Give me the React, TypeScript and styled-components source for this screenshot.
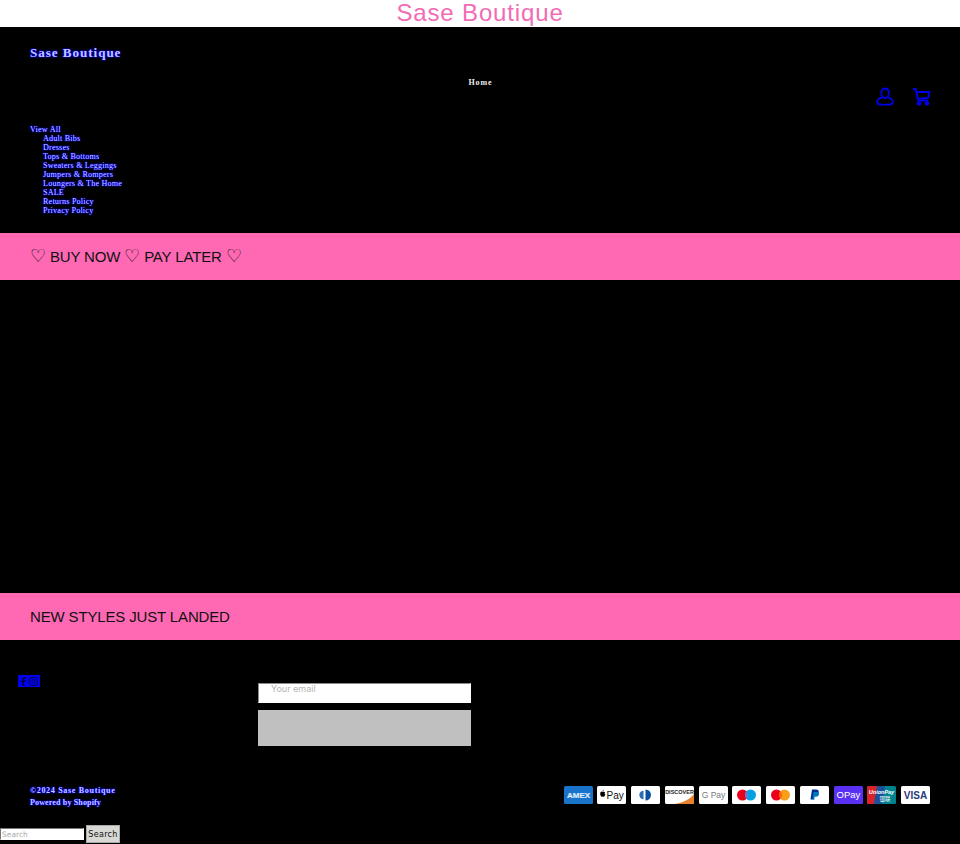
import React from 'react'
import styled, { createGlobalStyle } from 'styled-components'

const GlobalStyle = createGlobalStyle`
  html, body {
    margin: 0;
    background: #000;
    font-family: "Liberation Sans", Arial, sans-serif;
  }
`

const halo = `
  color: #c4c4ff;
  text-shadow: 0 0 1px #0000ff, 0 0 1px #0000ff, 0 0 2px #0000ff, 0 0 2px #0000ff;
`

const Page = styled.div`
  width: 960px;
  height: 844px;
  overflow: hidden;
  display: flex;
  flex-direction: column;
  background: #000;
`

const TopBar = styled.div`
  height: 27px;
  background: #fff;
  color: #f26bb5;
  font-size: 24px;
  line-height: 26px;
  letter-spacing: 0.85px;
  text-align: center;
`

const Header = styled.header`
  height: 206px;
  padding: 19px 29px 0 30px;
  box-sizing: border-box;
`

const Logo = styled.a`
  display: block;
  font-family: "Liberation Serif", serif;
  font-size: 13px;
  font-weight: 700;
  line-height: 14px;
  letter-spacing: 1px;
  ${halo}
`

const CenterNav = styled.div`
  margin-top: 18px;
  font-family: "Liberation Serif", serif;
  font-size: 8px;
  font-weight: 700;
  line-height: 9px;
  letter-spacing: 0.9px;
  color: #f0f0f0;
  text-align: center;
`

const IconRow = styled.div`
  display: flex;
  justify-content: flex-end;
  gap: 18px;
  height: 20px;
`

const Menu = styled.ul`
  list-style: none;
  margin: 18px 0 0;
  padding: 0;
  font-family: "Liberation Serif", serif;
  font-size: 8px;
  line-height: 9px;
  letter-spacing: 0.25px;
  ${halo}
`

const SubMenu = styled.ul`
  list-style: none;
  margin: 0;
  padding: 0 0 0 13px;
`

const Band = styled.div<{ $top: number }>`
  height: 47px;
  margin-top: ${p => p.$top}px;
  padding-left: 30px;
  background: #ff69b4;
  color: #111;
  font-size: 15px;
  letter-spacing: -0.15px;
  line-height: 47px;
`

const Heart = styled.span`
  font-size: 17.500px;
`

const Footer = styled.footer`
  flex: 1;
  display: flex;
  flex-direction: column;
  min-height: 0;
`

const FooterTop = styled.div`
  display: flex;
  height: 145px;
  padding: 34px 0 0 18px;
  box-sizing: border-box;
`

const Social = styled.div`
  display: flex;
  align-items: center;
  justify-content: center;
  gap: 3px;
  width: 22px;
  height: 12px;
  margin-top: 1px;
  background: #0000ee;
`

const Signup = styled.form`
  display: flex;
  flex-direction: column;
  gap: 7px;
  width: 213px;
  margin: 9px 0 0 218px;
`

const EmailInput = styled.input`
  height: 20px;
  box-sizing: border-box;
  padding: 0 12px 9px;
  border: 1px solid #fff;
  border-top: 1px solid #8a8a8a;
  border-left: 1px solid #8a8a8a;
  background: #fff;
  font-family: Inter, "Liberation Sans", sans-serif;
  font-size: 9px;
  &::placeholder {
    color: #b4b4b4;
  }
`

const SubmitButton = styled.button`
  height: 36px;
  border: 0;
  background: #c0c0c0;
`

const FooterBottom = styled.div`
  display: flex;
  justify-content: space-between;
  padding: 0 30px;
  height: 40px;
`

const Legal = styled.div`
  font-family: "Liberation Serif", serif;
  font-size: 8px;
  font-weight: 700;
  line-height: 12px;
  letter-spacing: 0.7px;
  ${halo}
`

const PoweredBy = styled.div`
  letter-spacing: 0.15px;
`

const Payments = styled.div`
  display: flex;
  gap: 4.750px;
  padding-top: 1px;
`

const PayCard = styled.svg`
  width: 29px;
  height: 18px;
  display: block;
`

const SearchBar = styled.form`
  display: flex;
  align-items: center;
  gap: 2px;
`

const SearchInput = styled.input`
  width: 84px;
  height: 12px;
  box-sizing: border-box;
  padding: 0 1px;
  border: 1px solid #fff;
  border-top-color: #777;
  border-left-color: #777;
  background: #fff;
  font-family: "DejaVu Sans", sans-serif;
  font-size: 7.5px;
  &::placeholder {
    color: #aaa;
  }
`

const SearchButton = styled.button`
  width: 34px;
  height: 18px;
  padding: 0;
  border: 1px solid #aaa;
  background: #d8d8d4;
  color: #111;
  font-family: "DejaVu Sans", sans-serif;
  font-size: 8px;
  letter-spacing: 0.3px;
`

const bold = { fontFamily: '"Liberation Sans", sans-serif', fontWeight: 700 }
const regular = { fontFamily: '"Liberation Sans", sans-serif', fontWeight: 400 }

const Card = ({ bg = '#fff', children }: { bg?: string; children: React.ReactNode }) => (
  <PayCard viewBox="0 0 29 18">
    <rect width="29" height="18" rx="1.500" fill={bg} />
    {children}
  </PayCard>
)

const App = () => (
  <Page>
    <GlobalStyle />
    <TopBar>Sase Boutique</TopBar>
    <Header>
      <Logo>Sase Boutique</Logo>
      <CenterNav>Home</CenterNav>
      <IconRow>
        <svg width="18" height="20" viewBox="0 0 18 20" fill="none" stroke="#0000ee" strokeWidth="1.8">
          <path d="M9 1.500c2.500 0 3.800 1.800 3.800 4.400S11.500 11 9 11 5.200 8.500 5.200 5.900 6.500 1.500 9 1.500z" />
          <path d="M6 10.400C3.400 11.200 1.200 12.800 1.200 15c0 1.800 1.500 2.600 3.600 2.600h8.400c2.100 0 3.600-.8 3.600-2.600 0-2.200-2.200-3.800-4.800-4.600" />
        </svg>
        <svg width="19" height="20" viewBox="0 0 19 20" fill="none" stroke="#0000ee" strokeWidth="1.8">
          <path d="M1 2h2.600l2.600 11.500h10" />
          <path d="M4 5h13.500l-1.300 5.800-10.600 1" />
          <circle cx="7" cy="16.500" r="1.400" fill="#0000ee" />
          <circle cx="15" cy="16.500" r="1.400" fill="#0000ee" />
        </svg>
      </IconRow>
      <Menu>
        <li>
          View All
          <SubMenu>
            <li>Adult Bibs</li>
            <li>Dresses</li>
            <li>Tops &amp; Bottoms</li>
            <li>Sweaters &amp; Leggings</li>
            <li>Jumpers &amp; Rompers</li>
            <li>Loungers &amp; The Home</li>
            <li>SALE</li>
            <li>Returns Policy</li>
            <li>Privacy Policy</li>
          </SubMenu>
        </li>
      </Menu>
    </Header>
    <Band $top={0}>
      <Heart>♡</Heart> BUY NOW <Heart>♡</Heart> PAY LATER <Heart>♡</Heart>
    </Band>
    <Band $top={313}>NEW STYLES JUST LANDED</Band>
    <Footer>
      <FooterTop>
        <Social>
          <svg width="5" height="9" viewBox="0 0 5 9" fill="#000049">
            <path d="M1.500 9V5H0V3.400h1.500V2.200C1.500.8 2.300 0 3.600 0H5v1.600H4c-.5 0-.8.3-.8.800v1h1.700L4.700 5H3.200v4z" />
          </svg>
          <svg width="9" height="9" viewBox="0 0 9 9" fill="none" stroke="#000049">
            <rect x=".5" y=".5" width="8" height="8" rx="2.200" />
            <circle cx="4.500" cy="4.500" r="1.800" />
          </svg>
        </Social>
        <Signup>
          <EmailInput placeholder="Your email" />
          <SubmitButton type="button" aria-label="Subscribe" />
        </Signup>
      </FooterTop>
      <FooterBottom>
        <Legal>
          <div>©2024 Sase Boutique</div>
          <PoweredBy>Powered by Shopify</PoweredBy>
        </Legal>
        <Payments>
          <Card bg="#1a74c9">
            <text x="14.500" y="12" textAnchor="middle" fontSize="8" fill="#cfe6ff" stroke="#fff" strokeWidth=".2" style={bold}>AMEX</text>
          </Card>
          <Card>
            <path d="M6.800 5.800c.5 0 1 .2 1.300.5-.7.5-.7 1.800.2 2.300-.3.900-.9 2.100-1.500 2.100-.4 0-.6-.3-1-.3s-.7.300-1 .3c-.8 0-1.600-1.700-1.600-3 0-1.400.9-2.100 1.600-2.100.5 0 .8.300 1 .3s.5-.400 1-.400zM6.700 3.800c0 .800-.6 1.500-1.200 1.500 0-.8.600-1.500 1.200-1.500z" fill="#000" />
            <text x="9.500" y="12.700" fontSize="10" fill="#111" style={regular}>Pay</text>
          </Card>
          <Card>
            <path d="M12.500 4.800v8.400a4.200 4.200 0 0 1 0-8.400z" fill="#2a6db5" />
            <path d="M14.500 3.500v11a5.500 5.500 0 0 0 0-11z" fill="#0b4f9e" />
          </Card>
          <Card>
            <path d="M29 8v8.500a1.500 1.500 0 0 1-1.500 1.500H10C19 16.500 25 13 29 8z" fill="#e8812b" />
            <text x="14.500" y="8" textAnchor="middle" fontSize="5.500" fill="#222" style={bold}>DISCOVER</text>
          </Card>
          <Card>
            <text x="14.500" y="12" textAnchor="middle" fontSize="8.500" fill="#777b80" style={regular}>G Pay</text>
          </Card>
          <Card>
            <circle cx="10.500" cy="9" r="5.500" fill="#eb001b" />
            <circle cx="18.500" cy="9" r="5.500" fill="#00a2e5" />
            <path d="M14.500 5.200a5.500 5.500 0 0 1 0 7.600 5.500 5.500 0 0 1 0-7.600z" fill="#7375cf" />
          </Card>
          <Card>
            <circle cx="10.500" cy="9" r="5.500" fill="#eb001b" />
            <circle cx="18.500" cy="9" r="5.500" fill="#f79e1b" />
            <path d="M14.500 5.200a5.500 5.500 0 0 1 0 7.600 5.500 5.500 0 0 1 0-7.600z" fill="#ff5f00" />
          </Card>
          <Card>
            <path d="M12 3.500h4c2 0 3 1 2.700 2.800-.3 2-1.700 3-3.600 3h-1.500l-.6 4.200H10.500z" fill="#003087" />
            <path d="M13.500 6h3.500c1.500 0 2.300.800 2 2.300-.3 1.700-1.500 2.500-3 2.500h-1.300l-.5 3H12.500z" fill="#0079c1" />
          </Card>
          <Card bg="#5a31f4">
            <text x="14.500" y="12.300" textAnchor="middle" fontSize="9.500" fill="#fff" style={regular}>OPay</text>
          </Card>
          <Card bg="#00838f">
            <path d="M1.500 0H11L8 18H1.500A1.500 1.500 0 0 1 0 16.500v-15A1.500 1.500 0 0 1 1.500 0z" fill="#d8232a" />
            <path d="M10 0h8l-3 18H7z" fill="#1a4f9c" />
            <text x="14.500" y="7.500" textAnchor="middle" fontSize="5.500" fontStyle="italic" fill="#fff" style={bold}>UnionPay</text>
            <text x="18" y="14.500" textAnchor="middle" fontSize="5.500" fill="#fff" style={{ fontFamily: '"Noto Sans CJK SC", sans-serif' }}>银联</text>
          </Card>
          <Card>
            <text x="14.500" y="12.500" textAnchor="middle" fontSize="10" fill="#2a3a7a" style={bold}>VISA</text>
          </Card>
        </Payments>
      </FooterBottom>
      <SearchBar>
        <SearchInput placeholder="Search" />
        <SearchButton type="button">Search</SearchButton>
      </SearchBar>
    </Footer>
  </Page>
)

export default App
